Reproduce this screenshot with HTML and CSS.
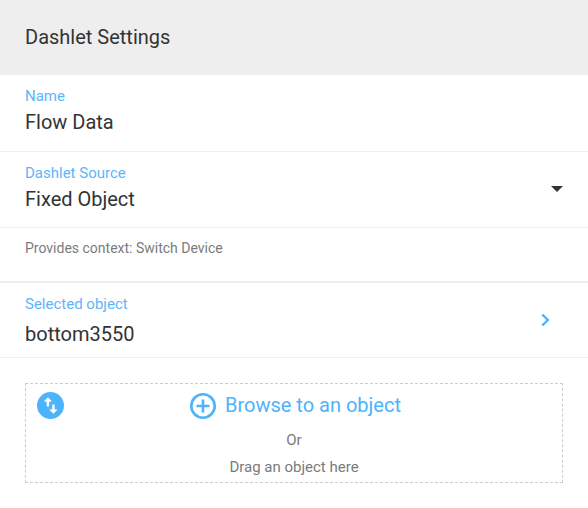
FILE: index.html
```html
<!DOCTYPE html>
<html lang="en">
<head>
<meta charset="utf-8">
<meta name="viewport" content="width=device-width, initial-scale=1">
<title>Dashlet Settings</title>
<link rel="stylesheet" href="styles.css">
</head>
<body>
<main class="panel">
  <header class="panel-header">
    <h1 class="title">Dashlet Settings</h1>
  </header>
  <form class="settings">
    <div class="row field">
      <label class="label" for="name">Name</label>
      <input class="value" id="name" type="text" value="Flow Data">
    </div>
    <div class="row field source">
      <label class="label" for="source">Dashlet Source</label>
      <select class="value" id="source">
        <option>Fixed Object</option>
      </select>
      <svg class="caret" viewBox="0 0 12 6" aria-hidden="true"><path d="M0 0h12L6 6z"/></svg>
    </div>
    <p class="row context">Provides context: Switch Device</p>
    <button class="row selected" type="button">
      <span class="selected-text">
        <span class="label">Selected object</span>
        <span class="value">bottom3550</span>
      </span>
      <svg class="chevron" viewBox="0 0 9 14" aria-hidden="true"><path d="M1.300 1.500 6.800 7l-5.500 5.500"/></svg>
    </button>
    <section class="dropzone">
      <svg class="swap" viewBox="0 0 26 26" aria-hidden="true">
        <circle cx="13" cy="13" r="13"/>
        <path d="M10.500 5 6.500 9.200h2.800V14h2.400V9.200h2.800zM15.800 21l4-4.200H17V12h-2.400v4.800h-2.800z"/>
      </svg>
      <button class="browse" type="button">
        <svg class="plus" viewBox="0 0 26 26" aria-hidden="true">
          <circle cx="13" cy="13" r="11.700"/>
          <path d="M13 6.500v13M6.500 13h13"/>
        </svg>
        Browse to an object
      </button>
      <p class="hint">Or</p>
      <p class="hint">Drag an object here</p>
    </section>
  </form>
</main>
</body>
</html>
```

FILE: styles.css
```css
* {
  box-sizing: border-box;
}

body {
  margin: 0;
  background: #fff;
  color: #333;
  font-family: Roboto, "Liberation Sans", sans-serif;
}

p {
  margin: 0;
}

button,
input,
select {
  margin: 0;
  padding: 0;
  border: 0;
  background: none;
  font-family: inherit;
}

.panel-header {
  padding: 24px 25px;
  background: #eee;
}

.title {
  margin: 0;
  font-size: 20px;
  font-weight: 400;
  line-height: 27px;
}

.row {
  padding: 9px 25px;
  border-bottom: 1px solid #eee;
}

.field {
  display: flex;
  flex-direction: column;
  padding-bottom: 15px;
}

.label {
  color: #5cb5fb;
  font-size: 15px;
  line-height: 24px;
}

.value {
  width: 100%;
  height: 28px;
  color: #333;
  font-size: 20px;
  line-height: 28px;
}

.source {
  position: relative;
  padding-bottom: 14px;
}

select.value {
  appearance: none;
}

.caret {
  position: absolute;
  right: 25px;
  top: 34px;
  width: 12px;
  height: 6px;
  fill: #333;
  pointer-events: none;
}

.context {
  padding-top: 10px;
  padding-bottom: 23px;
  border-bottom-width: 2px;
  color: #7b7b7b;
  font-size: 14px;
  line-height: 20px;
}

.selected {
  display: flex;
  align-items: center;
  justify-content: space-between;
  width: 100%;
  padding-right: 38px;
  border-bottom: 1px solid #eee;
  text-align: left;
}

.selected-text {
  display: flex;
  flex-direction: column;
  gap: 4px;
}

.chevron {
  width: 9px;
  height: 14px;
  fill: none;
  stroke: #4bb4fd;
  stroke-width: 2.400;
}

.dropzone {
  position: relative;
  display: flex;
  flex-direction: column;
  align-items: center;
  margin: 25px;
  padding: 8px 0 1px;
  border: 1px dashed #ccc;
}

.swap {
  position: absolute;
  left: 11px;
  top: 8px;
  width: 27px;
  height: 27px;
  fill: #4bb4fd;
}

.swap path {
  fill: #fff;
}

.browse {
  display: flex;
  align-items: center;
  gap: 9px;
  margin-bottom: 8px;
  padding-left: 3px;
  color: #4bb4fd;
  font-size: 20px;
  line-height: 27px;
}

.plus {
  width: 26px;
  height: 26px;
  fill: none;
  stroke: #4bb4fd;
  stroke-width: 2.600;
}

.hint {
  color: #7b7b7b;
  font-size: 15px;
  line-height: 27px;
}
```
